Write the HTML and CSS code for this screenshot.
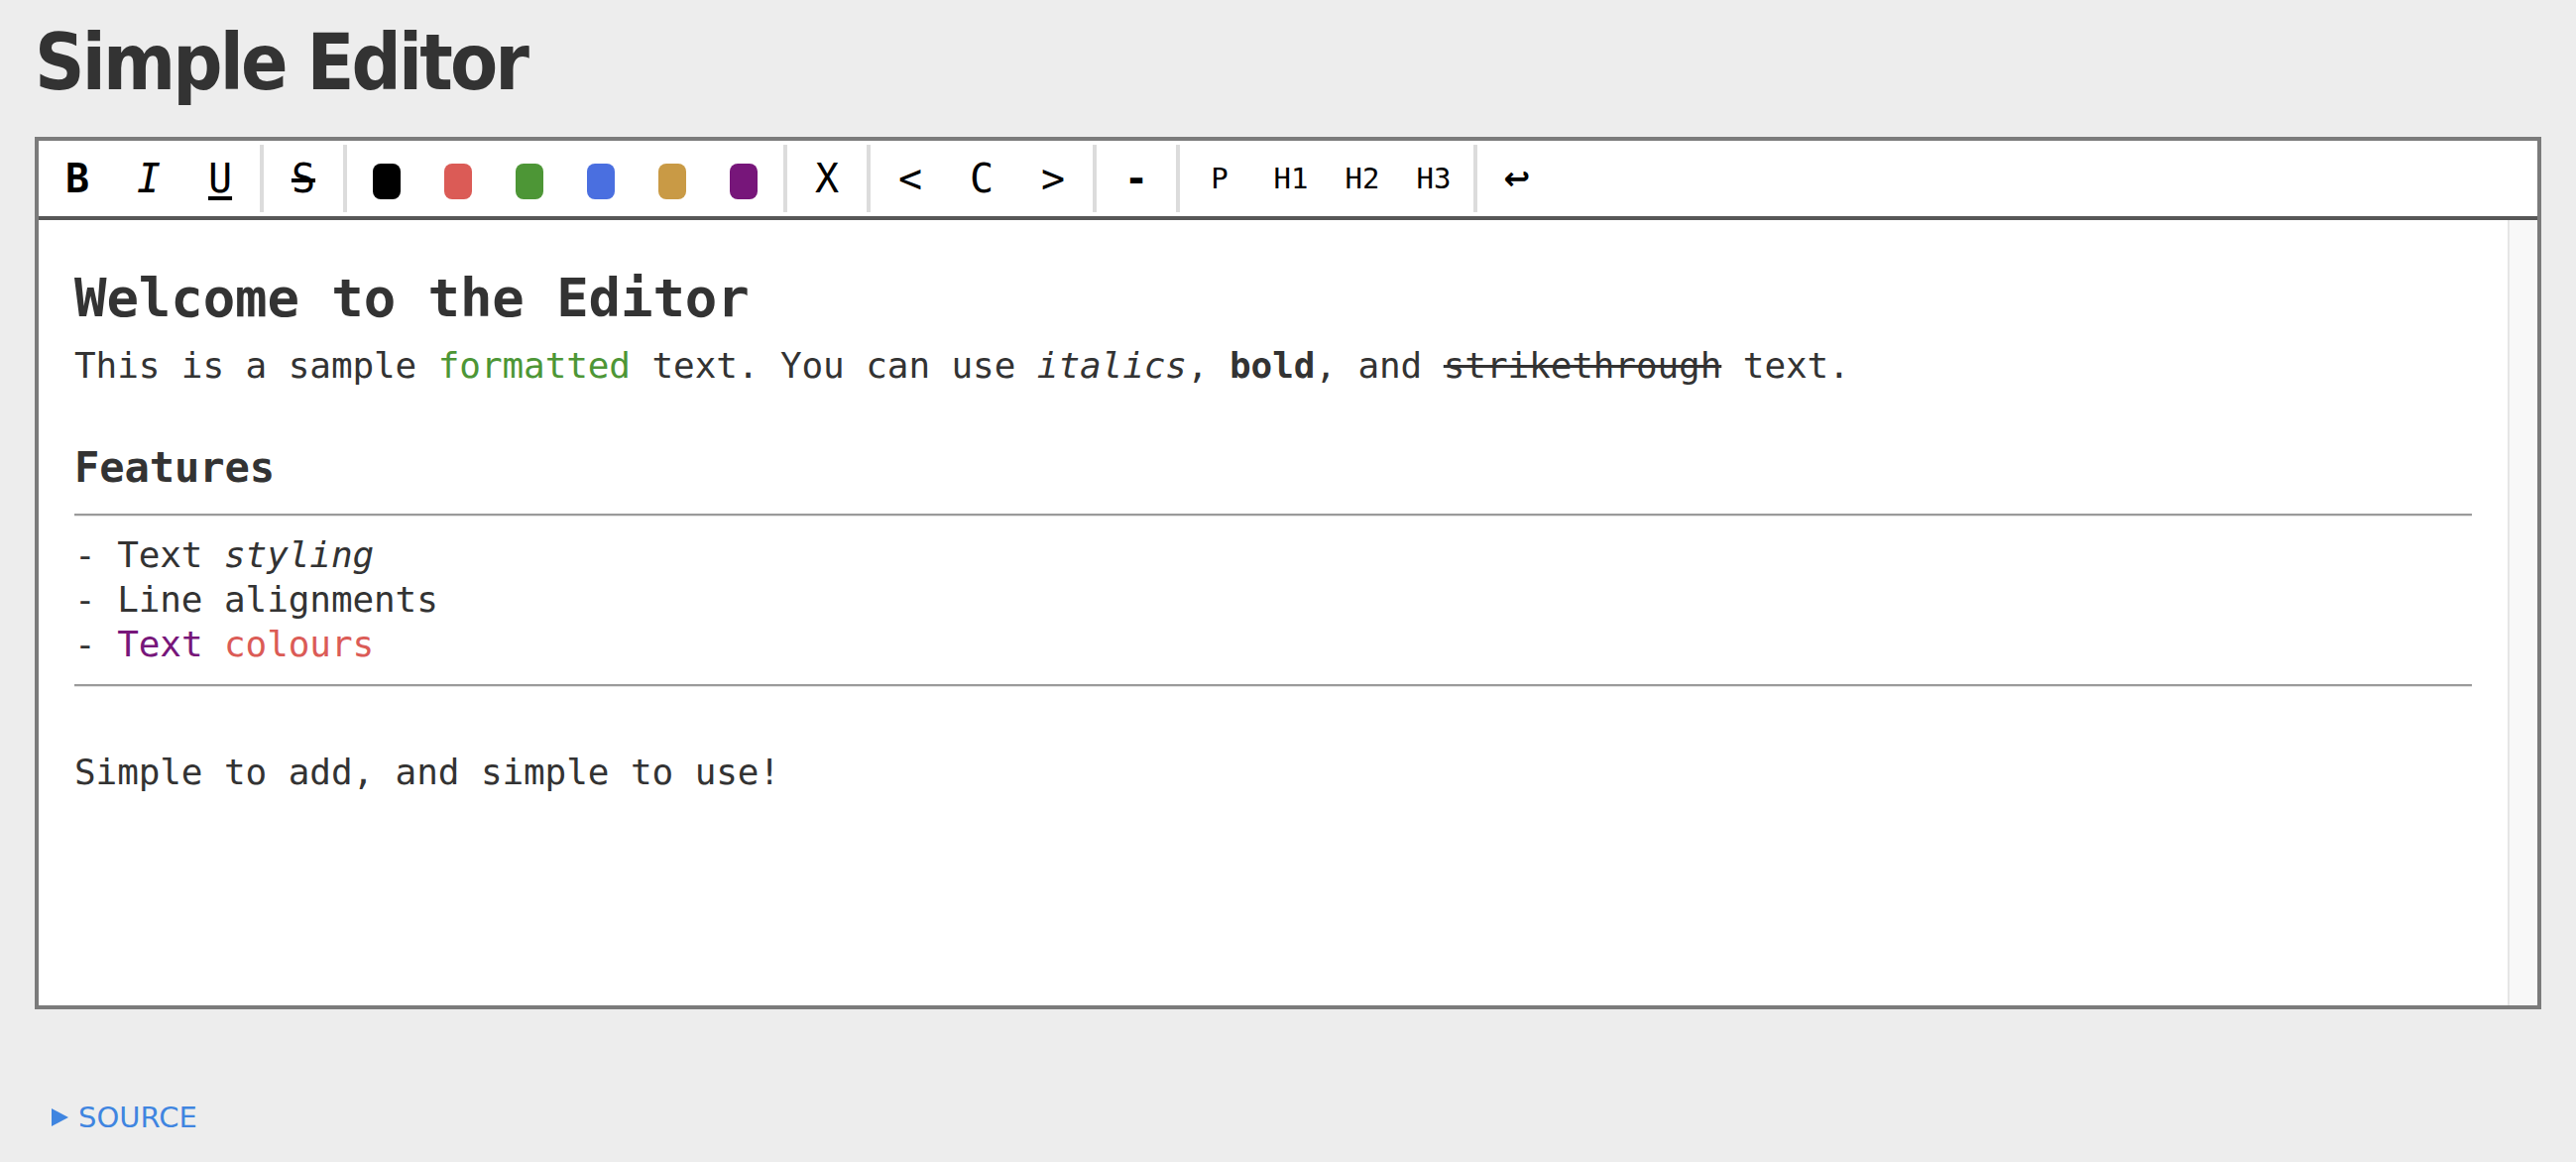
FILE: index.html
```html
<!DOCTYPE html>
<html lang="en">
<head>
<meta charset="utf-8">
<title>Simple Editor</title>
<link rel="stylesheet" href="styles.css">
</head>
<body>
<div class="page">
  <h1 class="title">Simple Editor</h1>
  <div class="editor">
    <div class="toolbar">
      <button class="btn bold">B</button>
      <button class="btn italic">I</button>
      <button class="btn under">U</button>
      <span class="sep"></span>
      <button class="btn strike">S</button>
      <span class="sep"></span>
      <button class="btn"><span class="swatch c-black"></span></button>
      <button class="btn"><span class="swatch c-red"></span></button>
      <button class="btn"><span class="swatch c-green"></span></button>
      <button class="btn"><span class="swatch c-blue"></span></button>
      <button class="btn"><span class="swatch c-gold"></span></button>
      <button class="btn"><span class="swatch c-purple"></span></button>
      <span class="sep"></span>
      <button class="btn">X</button>
      <span class="sep"></span>
      <button class="btn">&lt;</button>
      <button class="btn">C</button>
      <button class="btn">&gt;</button>
      <span class="sep"></span>
      <button class="btn bold">-</button>
      <span class="sep"></span>
      <button class="btn small">P</button>
      <button class="btn small">H1</button>
      <button class="btn small">H2</button>
      <button class="btn small">H3</button>
      <span class="sep"></span>
      <button class="btn undo">↩</button>
    </div>
    <div class="body">
      <div class="content">
        <h2 class="h-main">Welcome to the Editor</h2>
        <p class="line">This is a sample <span class="t-green">formatted</span> text. You can use <i>italics</i>, <b>bold</b>, and <s>strikethrough</s> text.</p>
        <h3 class="h-sub">Features</h3>
        <hr class="rule rule-first">
        <div class="line">- Text <i>styling</i></div>
        <div class="line">- Line alignments</div>
        <div class="line">- <span class="t-purple">Text</span> <span class="t-red">colours</span></div>
        <hr class="rule">
        <div class="line"><br></div>
        <div class="line">Simple to add, and simple to use!</div>
      </div>
      <div class="scrolltrack"></div>
    </div>
  </div>
  <details class="source">
    <summary class="source-summary"><span class="tri"></span>SOURCE</summary>
  </details>
</div>
</body>
</html>
```

FILE: styles.css
```css
html, body {
  margin: 0;
  padding: 0;
  background: #ededed;
}

.page {
  padding: 0 35px;
}

.title {
  margin: 18px 0 30px;
  font-family: "DejaVu Sans", sans-serif;
  font-weight: 700;
  font-stretch: condensed;
  font-size: 78px;
  line-height: normal;
  letter-spacing: -2.8px;
  color: #333;
}

.editor {
  border: 4px solid #7b7b7b;
  background: #fff;
}

.toolbar {
  display: flex;
  align-items: center;
  height: 76px;
  padding: 0 3px;
  border-bottom: 4px solid #575757;
}

.btn {
  display: flex;
  align-items: center;
  justify-content: center;
  width: 72px;
  height: 68px;
  padding: 0;
  border: 0;
  background: none;
  color: #000;
  font-family: "DejaVu Sans Mono", monospace;
  font-size: 40px;
  font-weight: 400;
  line-height: 1;
}

.btn.bold { font-weight: 700; }
.btn.italic { font-style: italic; }
.btn.under { text-decoration: underline; text-underline-offset: 4px; }
.btn.strike { text-decoration: line-through; }
.btn.small { font-size: 29px; }
.btn.undo { font-family: "DejaVu Sans", sans-serif; font-size: 32px; font-weight: 700; }

.sep {
  width: 4px;
  height: 68px;
  margin: 0 4px;
  background: #dcdcdc;
}

.swatch {
  display: block;
  width: 28px;
  height: 36px;
  margin-top: 5px;
  border-radius: 8px;
}

.c-black { background: #000; }
.c-red { background: #db5b56; }
.c-green { background: #4d9636; }
.c-blue { background: #4a6fe0; }
.c-gold { background: #c99a45; }
.c-purple { background: #77167a; }

.body {
  display: flex;
  height: 792px;
}

.content {
  flex: 1;
  min-width: 0;
  padding: 0 36px;
  font-family: "DejaVu Sans Mono", monospace;
  font-size: 36px;
  line-height: 45px;
  letter-spacing: -0.1px;
  color: #333;
  overflow: hidden;
}

.h-main {
  margin: 45px 0 11.5px;
  font-size: 54px;
  line-height: 67.5px;
  font-weight: 700;
}

.line {
  margin: 0;
  white-space: nowrap;
}

.h-sub {
  margin: 54.5px 0 0;
  font-size: 42.12px;
  line-height: 52.65px;
  font-weight: 700;
}

.rule {
  height: 0;
  margin: 18px 0;
  border: 0;
  border-top: 2px solid #9a9a9a;
  border-bottom: 1px solid #e6e6e6;
}

.rule-first {
  margin: 19.5px 0 16.5px;
}

.t-green { color: #4d9636; }
.t-purple { color: #77167a; }
.t-red { color: #db5b56; }

.scrolltrack {
  width: 26px;
  border-left: 2px solid #e6e6e6;
  border-right: 2px solid #fbfbfb;
  background: #f8f8f8;
}

.source {
  margin-top: 92px;
}

.source-summary {
  display: flex;
  align-items: center;
  padding-left: 17px;
  list-style: none;
  font-family: "DejaVu Sans", sans-serif;
  font-size: 29px;
  line-height: normal;
  color: #3f85e0;
  cursor: pointer;
}

.source-summary::-webkit-details-marker {
  display: none;
}

.tri {
  width: 0;
  height: 0;
  margin-right: 10px;
  border-left: 17px solid #3f85e0;
  border-top: 9.5px solid transparent;
  border-bottom: 9.5px solid transparent;
}
```
